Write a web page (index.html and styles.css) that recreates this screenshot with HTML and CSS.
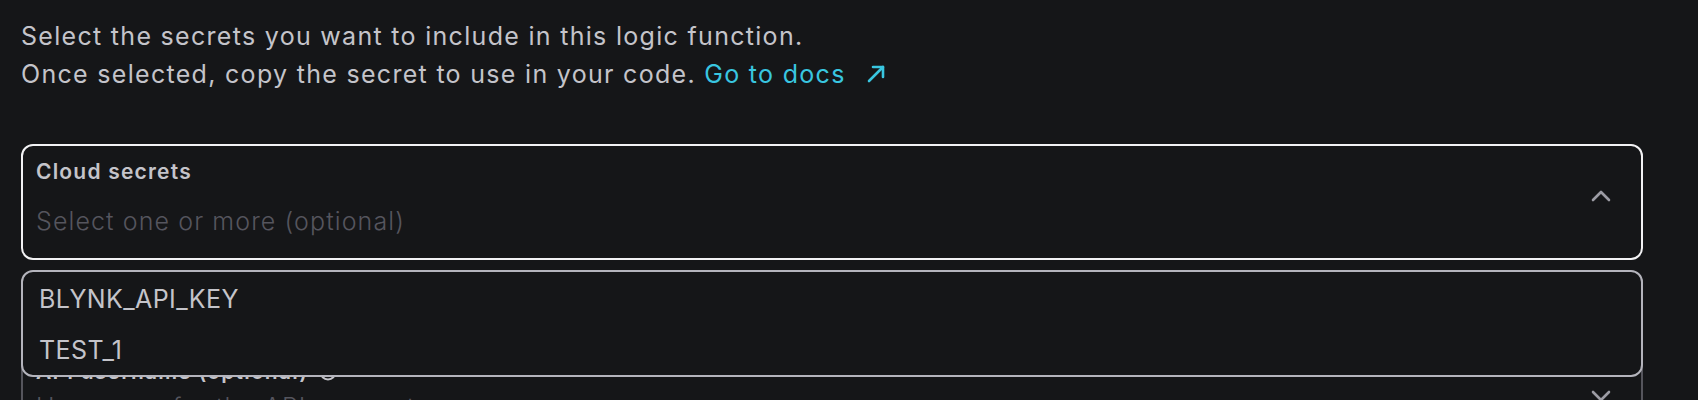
FILE: index.html
```html
<!DOCTYPE html>
<html lang="en">
<head>
  <meta charset="UTF-8">
  <title>Logic function secrets</title>
  <link rel="stylesheet" href="styles.css">
</head>
<body>
  <div class="panel">
    <p class="intro">
      Select the secrets you want to include in this logic function.<br>
      Once selected, copy the secret to use in your code.
      <a class="docs-link" href="#">Go to docs
        <svg class="docs-arrow" width="20" height="20" viewBox="0 0 20 20" fill="none" stroke="currentColor" stroke-width="2.6" stroke-linecap="round" stroke-linejoin="round">
          <path d="M3 17 L17 3"/>
          <path d="M7 3 H17 V13"/>
        </svg>
      </a>
    </p>

    <!-- Cloud secrets multi-select (open) -->
    <div class="field-wrap">
      <div class="field open">
        <div class="field-body">
          <span class="field-label">Cloud secrets</span>
          <span class="field-placeholder">Select one or more (optional)</span>
        </div>
        <svg class="chevron" width="20" height="12" viewBox="0 0 20 12" fill="none" stroke="currentColor" stroke-width="2.6" stroke-linecap="round" stroke-linejoin="round">
          <path d="M2 10 L10 2 L18 10"/>
        </svg>
      </div>

      <ul class="menu">
        <li class="menu-item">BLYNK_API_KEY</li>
        <li class="menu-item">TEST_1</li>
      </ul>
    </div>

    <!-- Next field, partly hidden under the menu -->
    <div class="field">
      <div class="field-body">
        <span class="field-label">API username (optional)
          <svg class="info" width="18" height="18" viewBox="0 0 18 18" fill="none" stroke="currentColor" stroke-width="2">
            <circle cx="9" cy="9" r="7.5"/>
            <path d="M9 8 V13" stroke-linecap="round"/>
            <circle cx="9" cy="5.2" r="0.6" fill="currentColor"/>
          </svg>
        </span>
        <span class="field-placeholder near">Username for the API account</span>
      </div>
      <svg class="chevron" width="20" height="12" viewBox="0 0 20 12" fill="none" stroke="currentColor" stroke-width="2.6" stroke-linecap="round" stroke-linejoin="round">
        <path d="M2 2 L10 10 L18 2"/>
      </svg>
    </div>
  </div>
</body>
</html>
```

FILE: styles.css
```css
/* Dark theme page */
body {
  margin: 0;
  padding: 0;
  background-color: #151618;
  color: #c4c4ca;
  font-family: Inter, "Noto Sans", sans-serif;
  overflow: hidden;
}
.panel {
  padding: 17px 55px 0 21px;
}
.intro {
  margin: 0;
  font-size: 25px;
  line-height: 38px;
  letter-spacing: 1.3px;
}
.docs-link {
  color: #39c6e0;
  text-decoration: none;
}
.docs-arrow {
  margin-left: 12px;
  vertical-align: -1px;
}
/* Select fields */
.field-wrap {
  position: relative;
  margin-top: 51px;
}
.field {
  display: flex;
  align-items: center;
  border: 2px solid #55555c;
  border-radius: 12px;
  padding: 14px 30px 23px 13px;
  height: 75px;
}
.field.open {
  border-color: #f2f2f4;
}
.field-body {
  flex: 1;
  display: flex;
  flex-direction: column;
  gap: 21px;
  align-self: flex-start;
}
.field-label {
  font-size: 21px;
  line-height: 24px;
  font-weight: 600;
  letter-spacing: 1.2px;
  color: #c4c4ca;
}
.field-placeholder {
  font-size: 25px;
  line-height: 32px;
  font-weight: 300;
  letter-spacing: 1.1px;
  color: #55555e;
}
.field-placeholder.near {
  margin-top: -14px;
}
.chevron {
  color: #9c9ca4;
  margin-top: -4px;
}
.info {
  vertical-align: -2px;
  margin-left: 4px;
}
/* Second field sits below, under the open menu */
.field-wrap + .field {
  margin-top: 84px;
}
/* Options menu overlays the next field */
.menu {
  position: absolute;
  top: calc(100% + 10px);
  left: 0;
  right: 0;
  z-index: 10;
  margin: 0;
  padding: 1px 0 0;
  list-style: none;
  background: #151618;
  border: 2px solid #b4b4bc;
  border-radius: 12px;
}
.menu-item {
  height: 51px;
  line-height: 52px;
  padding-left: 16px;
  font-size: 25px;
  letter-spacing: 0.4px;
  color: #c4c4ca;
}
```
